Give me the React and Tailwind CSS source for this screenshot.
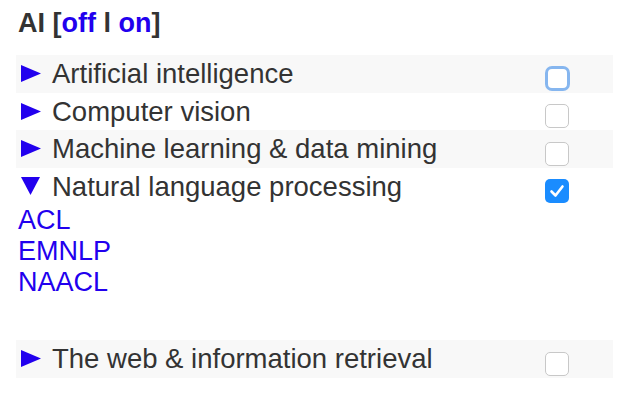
import React from "react";

const Right = () => (
  <svg width="20" height="17" viewBox="0 0 20 17" className="shrink-0">
    <polygon points="0,0 20,8.5 0,17" fill="#2200ee" />
  </svg>
);
const Down = () => (
  <svg width="19" height="18" viewBox="0 0 19 18" className="shrink-0">
    <polygon points="0,0 19,0 9.5,18" fill="#2200ee" />
  </svg>
);

function Box({ checked, focused }) {
  if (checked) {
    return (
      <div className="w-[24px] h-[24px] rounded-[5px] bg-[#1a8cff] flex items-center justify-center">
        <svg width="16" height="14" viewBox="0 0 16 14">
          <path d="M2.5 7.5 L6.5 11.5 L13.5 2.5" stroke="#fff" strokeWidth="2.6" fill="none" strokeLinecap="round" strokeLinejoin="round" />
        </svg>
      </div>
    );
  }
  if (focused) {
    return (
      <div className="w-[25px] h-[25px] -mt-[0.5px] -ml-[0.5px] rounded-[7px] bg-white border-[3px] border-[#86b6ef]" />
    );
  }
  return <div className="w-[24px] h-[24px] rounded-[5px] bg-white border border-[#c8c8c8]" />;
}

function Row({ label, banded, open, checked, focused }) {
  return (
    <div className={`h-[37.5px] flex items-start ${banded ? "bg-[#f8f8f8]" : ""}`}>
      <div className="w-[36px] pl-[5px] h-[37.5px] flex items-center">{open ? <Down /> : <Right />}</div>
      <div className="flex-1 leading-[37.5px] text-[27.5px] text-[#333]">{label}</div>
      <div className="w-[68px] pt-[11.5px]">
        <Box checked={checked} focused={focused} />
      </div>
    </div>
  );
}

export default function App() {
  return (
    <div className="w-[640px] h-[403px] bg-white overflow-hidden" style={{ fontFamily: '"Liberation Sans", Arial, sans-serif' }}>
      <div className="pt-[5px] pl-[18px] text-[27px] leading-[36px] font-bold text-[#333]">
        AI [<span className="text-[#2200ee]">off</span> l <span className="text-[#2200ee]">on</span>]
      </div>
      <div className="mt-[14px] ml-[16px] w-[597px]">
        <Row label="Artificial intelligence" banded focused />
        <Row label="Computer vision" />
        <Row label="Machine learning & data mining" banded />
        <Row label="Natural language processing" open checked />
        <div className="pl-[2px] text-[27px] leading-[31px] text-[#2200ee] flex flex-col">
          <span>ACL</span>
          <span>EMNLP</span>
          <span>NAACL</span>
        </div>
        <div className="h-[42px]" />
        <Row label="The web & information retrieval" banded />
      </div>
    </div>
  );
}
